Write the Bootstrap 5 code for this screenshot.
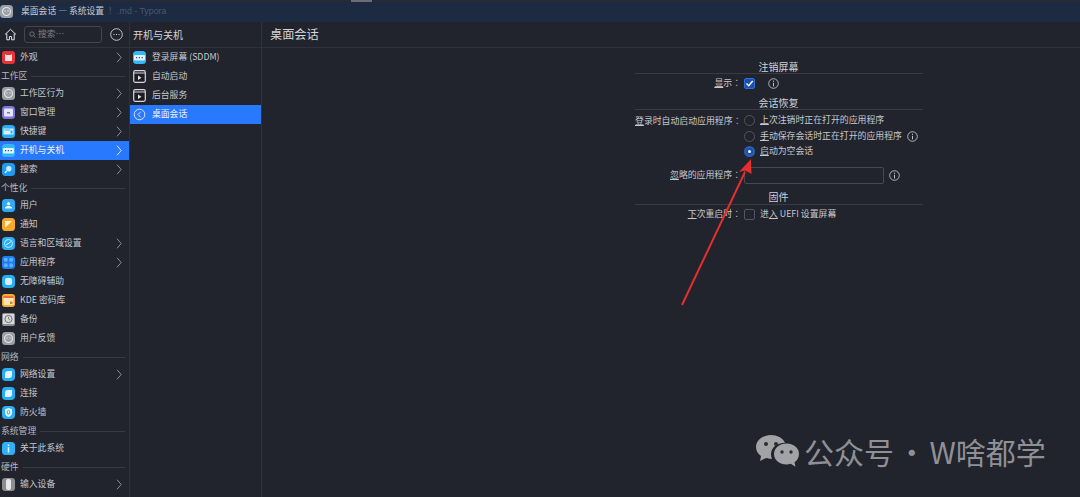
<!DOCTYPE html>
<html lang="zh-CN">
<head>
    <meta charset="UTF-8">
    <meta name="viewport" content="width=device-width, initial-scale=1.0">
    <title>桌面会话 — 系统设置</title>
    <link href="https://cdn.jsdelivr.net/npm/bootstrap@5.3.0/dist/css/bootstrap.min.css" rel="stylesheet">
    <style>
        html, body { height: 497px; overflow: hidden; }
        body { background: #21232d; color: #c6c8cc; font-family: "Noto Sans CJK SC", "Liberation Sans", sans-serif; font-size: 8.8px; line-height: 1; }
        .title-strip { height: 22px; background: #1c2a42; border-top: 1px solid #2c2a2d; position: relative; }
        .title-strip .tab-mark { position: absolute; left: 351px; top: -1px; width: 21px; height: 2px; background: #6b6d72; }
        .title-main { color: #c9ccd2; margin-left: 5px; }
        .title-ghost { color: #4b586f; margin-left: 4px; font-family: "Liberation Sans", sans-serif; }
        .shell { height: 475px; overflow: hidden; }
        .side-col { width: 130px; flex: none; border-right: 1px solid #2f313b; overflow: hidden; }
        .mid-col { width: 132px; flex: none; border-right: 1px solid #2f313b; }
        .top-row { height: 26px; border-bottom: 1px solid #2f313b; }
        .search-box { width: 78px; height: 17px; border: 1px solid #43454e; border-radius: 3px; color: #7c7e85; margin-left: 7px; padding-left: 4px; gap: 2px; }
        .set-row { height: 19px; padding-left: 2px; padding-right: 7px; gap: 5px; white-space: nowrap; }
        .set-row.on { background: #2979ff; color: #f0f3f8; }
        .mid-row { padding-left: 3px; gap: 6px; width: 131px; }
        .tile { width: 13px; height: 13px; flex: none; display: block; }
        .arrow { width: 6px; height: 11px; flex: none; margin-left: auto; color: #8d8f95; }
        .on .arrow { color: #dfe8fb; }
        .sect { height: 17px; gap: 4px; color: #b6b8bd; padding: 2px 4px 0 1px; }
        .sect::after { content: ""; flex: 1; height: 1px; background: #373944; }
        .head-mid { font-size: 10px; padding-left: 3px; color: #d3d5d9; }
        .head-main { font-size: 12.2px; padding-left: 8px; color: #d3d5d9; }
        .form-wrap { padding: 11px 0 0 373px; }
        .form-box { width: 288px; font-size: 8.9px; }
        .form-head { text-align: center; font-size: 10px; color: #d0d2d6; height: 15px; line-height: 15px; border-bottom: 1px solid #383a45; padding-right: 1px; }
        .gap-restore { margin-top: 2px; }
        .gap-firmware { margin-top: 5px; height: 16px; }
        .form-grid { display: grid; grid-template-columns: 106px 1fr; column-gap: 3px; }
        .lbl { text-align: right; align-self: center; white-space: nowrap; }
        .lbl u { text-underline-offset: 1px; }
        .lbl-first { height: 18px; padding-top: 3px; line-height: 15px; }
        .colon { font-family: "Noto Sans CJK TC", sans-serif; }
        .ctl { gap: 5px; white-space: nowrap; align-items: center; }
        .ctl-first { height: 18px; padding-top: 3px; }
        .ctl-second { height: 16px; }
        .ctl-third { height: 14px; }
        .row-field { margin-top: 9px; }
        .chk { width: 11px; height: 11px; border: 1px solid #53555e; border-radius: 2px; flex: none; }
        .chk.ticked { background: #1d4fa8; border-color: #2d6ee0; display: flex; align-items: center; justify-content: center; }
        .rad { width: 11px; height: 11px; border: 1px solid #53555e; border-radius: 50%; flex: none; }
        .rad.picked { background: #1d4fa8; border: 2px solid #2a5fb8; display: flex; align-items: center; justify-content: center; }
        .rad.picked::after { content: ""; width: 3px; height: 3px; border-radius: 50%; background: #fff; }
        .info { width: 11px; height: 11px; flex: none; }
        .text-field { width: 140px; height: 17px; border: 1px solid #464852; border-radius: 2px; flex: none; }
        .red-arrow { position: absolute; left: 675px; top: 150px; width: 85px; height: 160px; }
        .mark-water { position: absolute; left: 755px; top: 432px; gap: 5px; color: #8f9095; font-size: 30px; line-height: 38px; word-spacing: -4px; white-space: nowrap; }
    </style>
</head>
<body>

    <svg width="0" height="0" class="position-absolute">
        <symbol id="arrow" viewBox="0 0 6 11"><path d="M1 .7 5.2 5.5 1 10.3" fill="none" stroke="currentColor" stroke-width="1"/></symbol>
        <symbol id="info" viewBox="0 0 11 11"><circle cx="5.5" cy="5.5" r="4.8" fill="none" stroke="#c0c2c7" stroke-width=".9"/><path d="M5.5 2.6v1.2M5.5 4.8v3.6" stroke="#c0c2c7" stroke-width="1"/></symbol>
        <symbol id="gray" viewBox="0 0 13 13"><rect width="13" height="13" rx="3.5" fill="#9aa0a3"/><circle cx="6.5" cy="6.5" r="4" fill="none" stroke="#e1e3e4" stroke-width="1.2"/><circle cx="5" cy="6" r=".7" fill="#e1e3e4"/><circle cx="8" cy="6" r=".7" fill="#e1e3e4"/></symbol>
        <symbol id="red" viewBox="0 0 13 13"><rect width="13" height="13" rx="3" fill="#e4333a"/><path d="M3 3 4.5 4h4L10 3v7H3z" fill="#f6dede"/></symbol>
        <symbol id="win" viewBox="0 0 13 13"><rect width="13" height="13" rx="3.5" fill="#7d76d8"/><rect x="2" y="2.5" width="9" height="8" rx="1" fill="#e5e7f8"/><rect x="5" y="6" width="3" height="1.5" fill="#6a7ad0"/></symbol>
        <symbol id="keys" viewBox="0 0 13 13"><rect width="13" height="13" rx="3.5" fill="#27aef5"/><rect x="1.5" y="3.5" width="10" height="6" fill="#d8f1fd"/><rect x="2.5" y="4.5" width="5.5" height="1" fill="#27aef5"/><rect x="8.5" y="5.5" width="2" height="3" fill="#27aef5"/></symbol>
        <symbol id="dots" viewBox="0 0 13 13"><rect width="13" height="13" rx="3.5" fill="#35b6f8"/><rect x="1" y="4" width="11" height="5.5" rx="1" fill="#dff4fe"/><path d="M3 6.7h1.2M5.8 6.7H7M8.6 6.7h1.2" stroke="#44505e" stroke-width="1.2"/></symbol>
        <symbol id="find" viewBox="0 0 13 13"><rect width="13" height="13" rx="3.5" fill="#1e9df0"/><circle cx="6.8" cy="5.8" r="2.7" fill="#cfeafb"/><path d="M4.7 8 3 10" stroke="#e6f5fd" stroke-width="1.3"/></symbol>
        <symbol id="user" viewBox="0 0 13 13"><rect width="13" height="13" rx="3.5" fill="#2fa9f4"/><circle cx="6.5" cy="4.8" r="1.7" fill="#eaf6fe"/><path d="M3 9.5h7V8.3L7.5 7h-2L3 8.3z" fill="#eaf6fe"/></symbol>
        <symbol id="bell" viewBox="0 0 13 13"><rect width="13" height="13" rx="3.5" fill="#f8a928"/><path d="M3 3h7L3 10z" fill="#fdf0d4"/></symbol>
        <symbol id="lang" viewBox="0 0 13 13"><rect width="13" height="13" rx="4" fill="#2bb0f6"/><circle cx="6.5" cy="6.5" r="4" fill="none" stroke="#bfe8fd"/><path d="M4.3 7.7 6.8 6.3 8.8 4.6" stroke="#e6f6fe" fill="none"/></symbol>
        <symbol id="apps" viewBox="0 0 13 13"><rect width="13" height="13" rx="3" fill="#1f7ff2"/><circle cx="3.8" cy="3.8" r="2" fill="#57b3f8"/><circle cx="9.2" cy="3.8" r="2" fill="#57b3f8"/><circle cx="3.8" cy="9.2" r="2" fill="#57b3f8"/><circle cx="9.2" cy="9.2" r="2" fill="#57b3f8"/></symbol>
        <symbol id="access" viewBox="0 0 13 13"><rect width="13" height="13" rx="4" fill="#27aef5"/><rect x="3" y="3" width="7" height="7" rx="2" fill="#d5effd"/></symbol>
        <symbol id="wallet" viewBox="0 0 13 13"><rect width="13" height="13" rx="3" fill="#f7ab2f"/><rect x="1.5" y="3.5" width="10" height="7.5" rx="1" fill="#fde5b5"/><rect x="1.5" y="2" width="10" height="2" fill="#ef6a42"/><rect x="8" y="7.5" width="2.5" height="2.5" fill="#c98a34"/></symbol>
        <symbol id="backup" viewBox="0 0 13 13"><rect width="13" height="13" rx="2" fill="#8e9092"/><rect x="1" y="1" width="11" height="10" fill="#d8d9da"/><circle cx="6.5" cy="6" r="3.6" fill="none" stroke="#6e7072"/><path d="M6.5 3.8V6l1.6 1" fill="none" stroke="#6e7072" stroke-width=".8"/></symbol>
        <symbol id="net" viewBox="0 0 13 13"><rect width="13" height="13" rx="4" fill="#27aef5"/><path d="M3 6Q3 3 6 3h4v4q0 3-3 3H3z" fill="#e2f4fe"/></symbol>
        <symbol id="wall" viewBox="0 0 13 13"><rect width="13" height="13" rx="4" fill="#27aef5"/><path d="M6.5 2 10 3.3V7q0 2.5-3.5 4Q3 9.5 3 7V3.3z" fill="#e6f6fe"/><rect x="5.4" y="4.5" width="2.2" height="3.5" rx="1" fill="none" stroke="#27aef5"/></symbol>
        <symbol id="about" viewBox="0 0 13 13"><rect width="13" height="13" rx="3.5" fill="#2fb0f8"/><path d="M6.5 2.5V4M6.5 5.3v5.2" stroke="#f2faff" stroke-width="1.5"/></symbol>
        <symbol id="mouse" viewBox="0 0 13 13"><rect width="13" height="13" rx="3" fill="#8c8d8f"/><rect x="4" y="1" width="5" height="11" rx="2" fill="#e8e8e8"/></symbol>
        <symbol id="play" viewBox="0 0 13 13"><rect x=".7" y=".7" width="11.6" height="11.6" rx="1.5" fill="#1c1d22" stroke="#d6d7da" stroke-width="1.2"/><path d="M.7 3h11.6" stroke="#d6d7da"/><path d="M5 5.5 8.5 7.7 5 10z" fill="#e2e3e6"/></symbol>
        <symbol id="back" viewBox="0 0 13 13"><circle cx="6.5" cy="6.5" r="5.3" fill="none" stroke="#dbe7ff"/><path d="M7.8 3.7 5 6.5l2.8 2.8" fill="none" stroke="#dbe7ff"/></symbol>
    </svg>

    <div class="title-strip d-flex align-items-center">
        <i class="tab-mark"></i>
        <svg class="tile"><use href="#gray"/></svg>
        <span class="title-main ms-2">桌面会话 — 系统设置</span>
        <span class="title-ghost">！.md - Typora</span>
    </div>

    <div class="shell d-flex">
        <aside class="side-col">
            <div class="top-row d-flex align-items-center">
                <svg width="13" height="13" viewBox="0 0 13 13" class="ms-1"><path d="M1 6.5 6.5 1.3 12 6.5M2.8 5.5v6.3h2.6V8.5h2.2v3.3h2.6V5.5" fill="none" stroke="#e4e5e7" stroke-width="1"/></svg>
                <div class="search-box d-flex align-items-center">
                    <svg width="7" height="7" viewBox="0 0 7 7"><circle cx="3" cy="3" r="2.2" fill="none" stroke="#7c7e85" stroke-width=".8"/><path d="M4.7 4.7 6.5 6.5" stroke="#7c7e85" stroke-width=".8"/></svg>
                    <span>搜索⋯</span>
                </div>
                <svg width="13" height="13" viewBox="0 0 13 13" class="ms-2"><circle cx="6.5" cy="6.5" r="5.8" fill="none" stroke="#d5d6d9" stroke-width=".9"/><path d="M3.5 6.5h1M6 6.5h1M8.5 6.5h1" stroke="#d5d6d9" stroke-width="1.1"/></svg>
            </div>
            <div id="sideList"></div>
        </aside>

        <section class="mid-col">
            <div class="top-row head-mid d-flex align-items-center">开机与关机</div>
            <div class="set-row mid-row d-flex align-items-center"><svg class="tile"><use href="#dots"/></svg>登录屏幕 (SDDM)</div>
            <div class="set-row mid-row d-flex align-items-center"><svg class="tile"><use href="#play"/></svg>自动启动</div>
            <div class="set-row mid-row d-flex align-items-center"><svg class="tile"><use href="#play"/></svg>后台服务</div>
            <div class="set-row mid-row on d-flex align-items-center"><svg class="tile"><use href="#back"/></svg>桌面会话</div>
        </section>

        <main class="flex-grow-1">
            <div class="top-row head-main d-flex align-items-center">桌面会话</div>
            <div class="form-wrap">
                <div class="form-box">
                    <div class="form-head">注销屏幕</div>
                    <div class="form-grid py-1">
                        <div class="lbl"><u>显</u>示<span class="colon" lang="zh-TW">：</span></div>
                        <div class="ctl d-flex"><span class="chk ticked"><svg width="9" height="9" viewBox="0 0 9 9"><path d="M1.5 4.5 3.7 6.7 7.7 2" fill="none" stroke="#fff" stroke-width="1.5"/></svg></span><svg class="info ms-2"><use href="#info"/></svg></div>
                    </div>
                    <div class="form-head gap-restore">会话恢复</div>
                    <div class="form-grid">
                        <div class="lbl lbl-first"><u>登</u>录时自动启动应用程序<span class="colon" lang="zh-TW">：</span></div>
                        <div class="ctl ctl-first d-flex"><span class="rad"></span><span><u>上</u>次注销时正在打开的应用程序</span></div>
                        <div></div>
                        <div class="ctl ctl-second d-flex"><span class="rad"></span><span><u>手</u>动保存会话时正在打开的应用程序</span><svg class="info"><use href="#info"/></svg></div>
                        <div></div>
                        <div class="ctl ctl-third d-flex"><span class="rad picked"></span><span><u>启</u>动为空会话</span></div>
                        <div class="lbl row-field"><u>忽</u>略的应用程序<span class="colon" lang="zh-TW">：</span></div>
                        <div class="ctl d-flex row-field"><span class="text-field"></span><svg class="info"><use href="#info"/></svg></div>
                    </div>
                    <div class="form-head gap-firmware">固件</div>
                    <div class="form-grid pt-1">
                        <div class="lbl"><u>下</u>次重启时<span class="colon" lang="zh-TW">：</span></div>
                        <div class="ctl d-flex"><span class="chk"></span><span>进<u>入</u> UEFI 设置屏幕</span></div>
                    </div>
                </div>
            </div>
        </main>
    </div>

    <svg class="red-arrow" viewBox="0 0 85 160">
        <path d="M7 155 70 22" stroke="#e62e2e" stroke-width="2" fill="none"/>
        <path d="M76 9 76.5 24 70 20.5 64 22z" fill="#e62e2e"/>
    </svg>

    <div class="mark-water d-flex align-items-center">
        <svg width="44" height="36" viewBox="0 0 44 36">
            <path d="M16 2C7 2 1 8 1 14c0 4 2 7 5 9l-1 5 6-3c2 .6 3 .8 5 .8h1c-.6-1.5-1-3-1-4.5 0-6.5 6-11.5 14-11.5C28 5 22 2 16 2z" fill="#a2a3a7"/>
            <path d="M44 21c0-6-5.5-10.5-12.5-10.5S19 15 19 21s5.500 10.500 12.500 10.500c1.500 0 3-.2 4.300-.7l4.700 3-1-4.500C42.200 27.300 44 24.500 44 21z" fill="#a2a3a7"/>
            <circle cx="11" cy="11" r="2" fill="#2a2c34"/><circle cx="21" cy="11" r="2" fill="#2a2c34"/>
            <circle cx="27" cy="19" r="1.7" fill="#2a2c34"/><circle cx="36" cy="19" r="1.7" fill="#2a2c34"/>
        </svg>
        <span>公众号 · W啥都学</span>
    </div>

    <script>
        // sidebar rows, s = section heading, a = has submenu arrow
        const sideItems = [
            { i: 'red', t: '外观', a: 1 },
            { s: '工作区' },
            { i: 'gray', t: '工作区行为', a: 1 },
            { i: 'win', t: '窗口管理', a: 1 },
            { i: 'keys', t: '快捷键', a: 1 },
            { i: 'dots', t: '开机与关机', a: 1, on: 1 },
            { i: 'find', t: '搜索', a: 1 },
            { s: '个性化' },
            { i: 'user', t: '用户' },
            { i: 'bell', t: '通知' },
            { i: 'lang', t: '语言和区域设置', a: 1 },
            { i: 'apps', t: '应用程序', a: 1 },
            { i: 'access', t: '无障碍辅助' },
            { i: 'wallet', t: 'KDE 密码库' },
            { i: 'backup', t: '备份' },
            { i: 'gray', t: '用户反馈' },
            { s: '网络' },
            { i: 'net', t: '网络设置', a: 1 },
            { i: 'net', t: '连接' },
            { i: 'wall', t: '防火墙' },
            { s: '系统管理' },
            { i: 'about', t: '关于此系统' },
            { s: '硬件' },
            { i: 'mouse', t: '输入设备', a: 1 },
            { i: 'win', t: '' }
        ];

        document.getElementById('sideList').innerHTML = sideItems.map(item => {
            if (item.s) return `<div class="sect d-flex align-items-center">${item.s}</div>`;
            const arrow = item.a ? '<svg class="arrow"><use href="#arrow"/></svg>' : '';
            return `<div class="set-row d-flex align-items-center ${item.on ? 'on' : ''}"><svg class="tile"><use href="#${item.i}"/></svg><span>${item.t}</span>${arrow}</div>`;
        }).join('');
    </script>

    <script src="https://cdn.jsdelivr.net/npm/bootstrap@5.3.0/dist/js/bootstrap.bundle.min.js"></script>
</body>
</html>
